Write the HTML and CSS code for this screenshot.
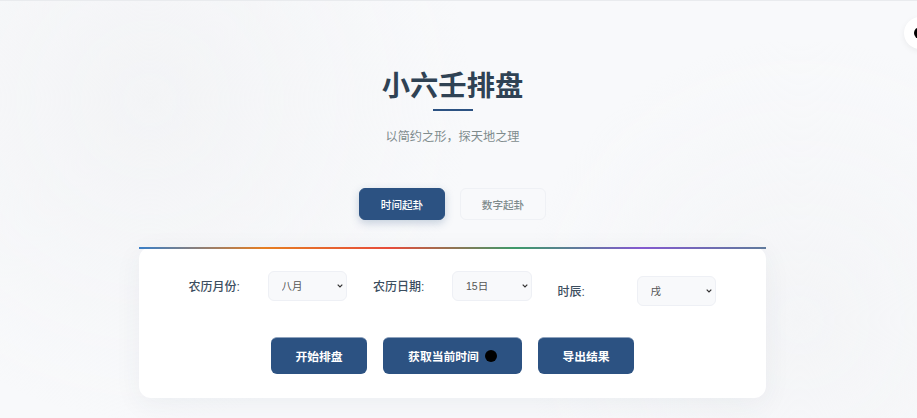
FILE: index.html
```html
<!DOCTYPE html>
<html lang="zh-CN">
<head>
    <meta charset="UTF-8">
    <meta name="viewport" content="width=device-width, initial-scale=1.0">
    <title>小六壬排盘</title>
    <link rel="stylesheet" href="styles.css">
</head>
<body>
    <button class="theme-toggle" aria-label="切换"><span class="dot"></span></button>

    <div class="container">
        <header class="header">
            <h1>小六壬排盘</h1>
            <p>以简约之形，探天地之理</p>
        </header>

        <div class="tabs">
            <button class="tab active">时间起卦</button>
            <button class="tab">数字起卦</button>
        </div>

        <div class="card">
            <div class="form-row">
                <div class="form-group">
                    <label for="month">农历月份:</label>
                    <select id="month">
                        <option>八月</option>
                    </select>
                </div>
                <div class="form-group">
                    <label for="day">农历日期:</label>
                    <select id="day">
                        <option>15日</option>
                    </select>
                </div>
                <div class="form-group low">
                    <label for="hour">时辰:</label>
                    <select id="hour">
                        <option>戌</option>
                    </select>
                </div>
            </div>
            <div class="actions">
                <button class="btn">开始排盘</button>
                <button class="btn btn-time">获取当前时间<span class="dot"></span></button>
                <button class="btn">导出结果</button>
            </div>
        </div>
    </div>
</body>
</html>
```

FILE: styles.css
```css
* {
    box-sizing: border-box;
}

html, body {
    height: 100%;
}

body {
    margin: 0;
    padding-right: 12px;
    overflow: hidden;
    border-top: 1px solid #e9ebee;
    font-family: "Liberation Sans", "Noto Sans CJK SC", sans-serif;
    color: #2c3e50;
    background-color: #f8f9fb;
    background-image:
        radial-gradient(circle at 150px 100px, #f3f4f6 0, rgba(243, 244, 246, 0) 320px),
        radial-gradient(circle at 800px 320px, #f4f5f7 0, rgba(244, 245, 247, 0) 280px);
}

.container {
    width: 627px;
    margin: 0 auto;
}

.header {
    text-align: center;
    padding-top: 65px;
}

.header h1 {
    margin: 0;
    font-size: 28.3px;
    line-height: 40px;
    font-weight: 700;
    color: #2f4254;
}

.header h1::after {
    content: "";
    display: block;
    width: 40px;
    height: 2px;
    margin: 3px auto 0;
    background: #2c5282;
}

.header p {
    margin: 17px 0 0;
    font-size: 12.2px;
    line-height: 18px;
    color: #7f8c8d;
}

.tabs {
    display: flex;
    justify-content: center;
    gap: 15px;
    margin-top: 42px;
}

.tab {
    width: 86px;
    height: 32px;
    padding: 0;
    border: 1px solid #eff1f5;
    border-radius: 6px;
    background: #f8f9fb;
    color: #7f8c8d;
    font-family: inherit;
    font-size: 10.6px;
    font-weight: 500;
}

.tab.active {
    border-color: #2c5282;
    background: #2c5282;
    color: #fff;
    box-shadow: 0 3px 8px rgba(44, 82, 130, 0.25);
}

.card {
    position: relative;
    height: 151px;
    margin-top: 27px;
    padding: 24px 0 0;
    border-radius: 12px;
    background: #fff;
    box-shadow: 0 6px 28px rgba(44, 62, 80, 0.06);
}

.card::before {
    content: "";
    position: absolute;
    top: 0;
    left: 0;
    right: 0;
    height: 2px;
    background: linear-gradient(90deg, #3a7fc8, #e67e22, #e74c3c, #3d9a6a, #8459d0, #5f7a9c);
}

.form-row {
    display: flex;
    justify-content: center;
    align-items: flex-start;
    gap: 25.5px;
}

.form-group {
    display: flex;
    align-items: center;
    width: 159px;
}

.form-group.low {
    margin-top: 5px;
}

.form-group label {
    width: 79px;
    padding-bottom: 2px;
    font-size: 12px;
    font-weight: 500;
    color: #3c4e60;
}

.form-group select {
    appearance: none;
    width: 79.5px;
    height: 30px;
    padding: 0 13px;
    border: 1px solid #eef0f5;
    border-radius: 6px;
    background-color: #f8f9fb;
    background-image: url("data:image/svg+xml,%3Csvg xmlns='http://www.w3.org/2000/svg' width='6' height='4' viewBox='0 0 6 4'%3E%3Cpath d='M.7.7 3 3 5.3.7' fill='none' stroke='%23333' stroke-width='1.2'/%3E%3C/svg%3E");
    background-repeat: no-repeat;
    background-position: right 3px center;
    color: #555;
    font-family: inherit;
    font-size: 10.5px;
}

.actions {
    display: flex;
    justify-content: center;
    gap: 16px;
    margin-top: 31px;
}

.btn {
    display: flex;
    align-items: center;
    justify-content: center;
    width: 96px;
    height: 37px;
    padding: 0 0 1px;
    border: 0;
    border-top: 1px solid #8fa3bd;
    border-radius: 6px;
    background: #2c5282;
    color: #fff;
    font-family: inherit;
    font-size: 11.8px;
    font-weight: 700;
}

.btn-time {
    width: 139px;
}

.dot {
    display: block;
    width: 12px;
    height: 12px;
    border-radius: 50%;
    background: #000;
}

.btn .dot {
    margin-left: 6px;
}

.theme-toggle {
    position: absolute;
    top: 17px;
    right: -19px;
    display: flex;
    align-items: center;
    justify-content: center;
    width: 32px;
    height: 32px;
    padding: 0;
    border: 0;
    border-radius: 50%;
    background: #fff;
    box-shadow: 0 2px 6px rgba(0, 0, 0, 0.06);
}
```
